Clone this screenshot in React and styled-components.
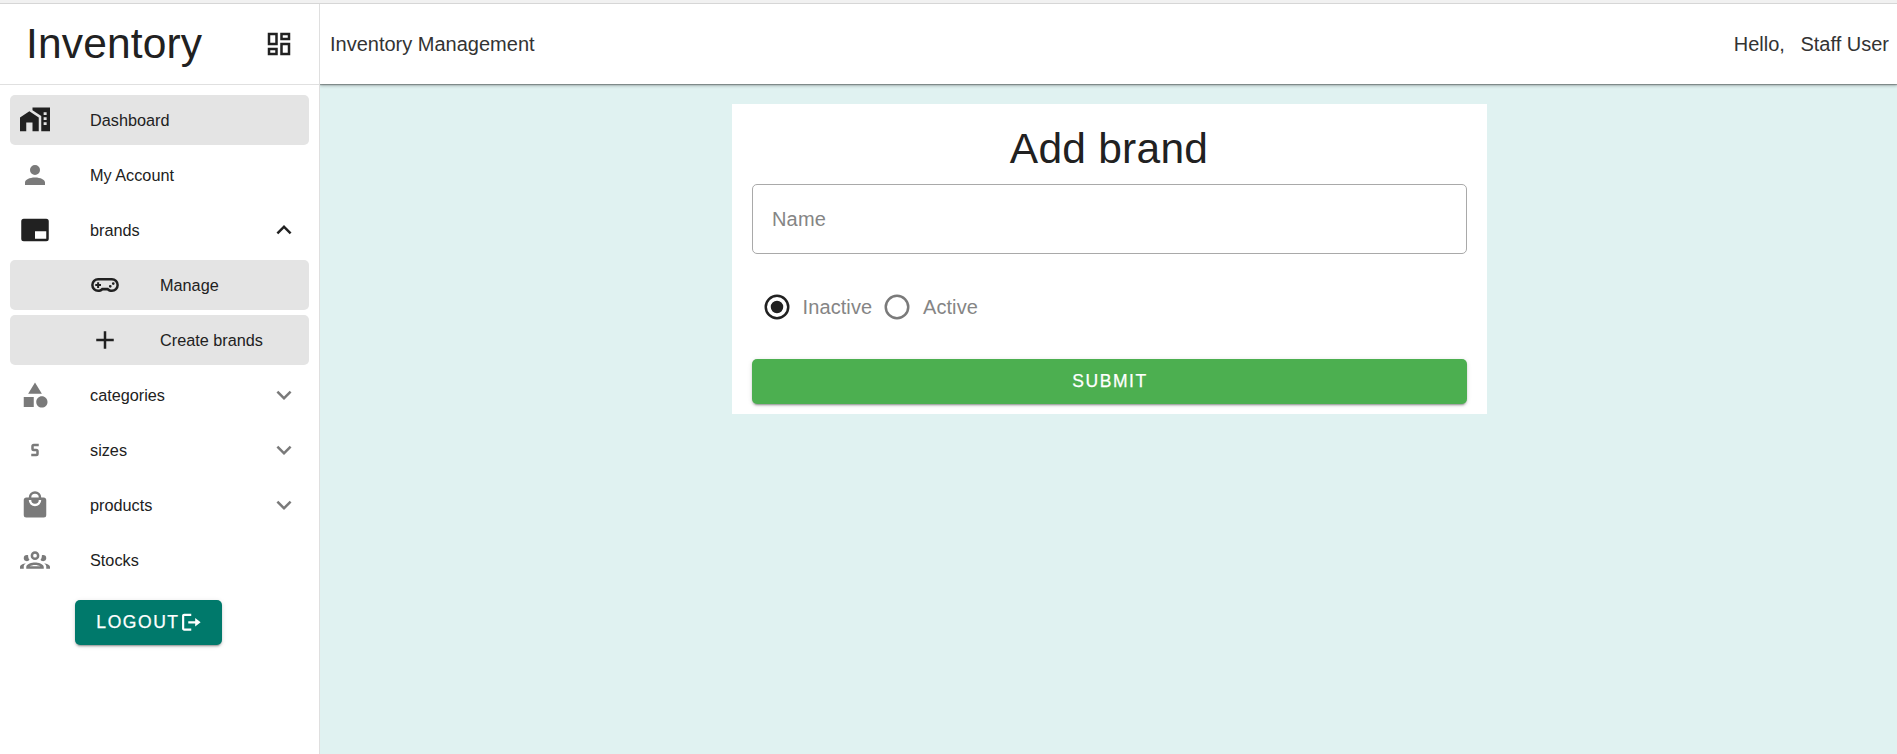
import React from 'react';
import styled, { createGlobalStyle, css } from 'styled-components';

const Global = createGlobalStyle`
  *, *::before, *::after { box-sizing: border-box; }
  body { margin: 0; overflow: hidden; font-family: "Liberation Sans", Arial, sans-serif; color: #212121; }
`;

const ICONS = {
  dashboard: 'M19,5V7H15V5H19M9,5V11H5V5H9M19,13V19H15V13H19M9,17V19H5V17H9M21,3H13V9H21V3M11,3H3V13H11V3M21,11H13V21H21V11M11,15H3V21H11V15Z',
  home: 'M10,2V4.2L17,8.8V21H24V2H10M18.9,5.8H21.3V8H18.9V5.8M18.9,9.8H21.3V12H18.9V9.8M18.9,13.8H21.3V16H18.9V13.8M7.5,5L0,10V21H5V14H10V21H15V10L7.5,5Z',
  account: 'M12,4A4,4 0 0,1 16,8A4,4 0 0,1 12,12A4,4 0 0,1 8,8A4,4 0 0,1 12,4M12,14C16.42,14 20,15.79 20,18V20H4V18C4,15.79 7.58,14 12,14Z',
  watermark: 'M21,3H3A2,2 0 0,0 1,5V19A2,2 0 0,0 3,21H21A2,2 0 0,0 23,19V5A2,2 0 0,0 21,3M21,19H12V13H21V19Z',
  gamepad: 'M6.5,6.4H17.5A5.6,5.6 0 0,1 23.1,12A5.6,5.6 0 0,1 17.5,17.6C16,17.6 14.8,17.1 13.8,16.3H10.2C9.2,17.1 8,17.6 6.5,17.6A5.6,5.6 0 0,1 0.9,12A5.6,5.6 0 0,1 6.5,6.4M6.5,8.4A3.6,3.6 0 0,0 2.9,12A3.6,3.6 0 0,0 6.5,15.6C7.8,15.6 8.7,15.1 9.4,14.2H14.6C15.3,15.1 16.2,15.6 17.5,15.6A3.6,3.6 0 0,0 21.1,12A3.6,3.6 0 0,0 17.5,8.4H6.5M5.7,9.7H7.3V11.2H8.8V12.8H7.3V14.3H5.7V12.8H4.2V11.2H5.7V9.7M18.6,9.7A1.1,1.1 0 0,1 19.7,10.8A1.1,1.1 0 0,1 18.6,11.9A1.1,1.1 0 0,1 17.5,10.8A1.1,1.1 0 0,1 18.6,9.7M16.2,11.9A1.1,1.1 0 0,1 17.3,13A1.1,1.1 0 0,1 16.2,14.1A1.1,1.1 0 0,1 15.1,13A1.1,1.1 0 0,1 16.2,11.9Z',
  plus: 'M19,13H13V19H11V13H5V11H11V5H13V11H19V13Z',
  shape: 'M11,13.5V21.5H3V13.5H11M12,2L17.5,11H6.5L12,2M17.5,13C20,13 22,15 22,17.5C22,20 20,22 17.5,22C15,22 13,20 13,17.5C13,15 15,13 17.5,13Z',
  sizeS: 'M11,7A2,2 0 0,0 9,9V11A2,2 0 0,0 11,13H13V15H9V17H13A2,2 0 0,0 15,15V13A2,2 0 0,0 13,11H11V9H15V7H11Z',
  shopping: 'M12,13A5,5 0 0,1 7,8H9A3,3 0 0,0 12,11A3,3 0 0,0 15,8H17A5,5 0 0,1 12,13M12,3A3,3 0 0,1 15,6H9A3,3 0 0,1 12,3M19,6H17A5,5 0 0,0 12,1A5,5 0 0,0 7,6H5C3.89,6 3,6.89 3,8V20A2,2 0 0,0 5,22H19A2,2 0 0,0 21,20V8C21,6.89 20.1,6 19,6Z',
  group: 'M12,5A3.5,3.5 0 0,0 8.5,8.5A3.5,3.5 0 0,0 12,12A3.5,3.5 0 0,0 15.5,8.5A3.5,3.5 0 0,0 12,5M12,7A1.5,1.5 0 0,1 13.5,8.5A1.5,1.5 0 0,1 12,10A1.5,1.5 0 0,1 10.5,8.5A1.5,1.5 0 0,1 12,7M5.5,8A2.5,2.5 0 0,0 3,10.5C3,11.44 3.53,12.25 4.29,12.68C4.65,12.88 5.06,13 5.5,13C5.94,13 6.35,12.88 6.71,12.68C7.08,12.47 7.39,12.17 7.62,11.81C6.89,10.86 6.5,9.7 6.5,8.5C6.5,8.41 6.5,8.31 6.5,8.22C6.2,8.08 5.86,8 5.5,8M18.5,8C18.14,8 17.8,8.08 17.5,8.22C17.5,8.31 17.5,8.41 17.5,8.5C17.5,9.7 17.11,10.86 16.38,11.81C16.5,12 16.63,12.15 16.78,12.3C16.94,12.45 17.1,12.58 17.29,12.68C17.65,12.88 18.06,13 18.5,13C18.94,13 19.35,12.88 19.71,12.68C20.47,12.25 21,11.44 21,10.5A2.5,2.5 0 0,0 18.5,8M12,14C9.66,14 5,15.17 5,17.5V19H19V17.5C19,15.17 14.34,14 12,14M4.71,14.55C2.78,14.78 0,15.76 0,17.5V19H3V17.07C3,16.06 3.69,15.22 4.71,14.55M19.29,14.55C20.31,15.22 21,16.06 21,17.07V19H24V17.5C24,15.76 21.22,14.78 19.29,14.55M12,16C13.53,16 15.24,16.5 16.23,17H7.77C8.76,16.5 10.47,16 12,16Z',
  down: 'M7.41,8.58L12,13.17L16.59,8.58L18,10L12,16L6,10L7.41,8.58Z',
  up: 'M7.41,15.41L12,10.83L16.59,15.41L18,14L12,8L6,14L7.41,15.41Z',
  logout: 'M16.2 7.4V10.8H8.8V13.2H16.2V16.6L22 12M4.5 5.3H12V3H4.5C3.2 3 2.2 3.9 2.2 5V19C2.2 20.1 3.2 21 4.5 21H12V18.7H4.5V5.3Z',
  radioOff: 'M12,20A8,8 0 0,1 4,12A8,8 0 0,1 12,4A8,8 0 0,1 20,12A8,8 0 0,1 12,20M12,2A10,10 0 0,0 2,12A10,10 0 0,0 12,22A10,10 0 0,0 22,12A10,10 0 0,0 12,2Z',
  radioOn: 'M12,20A8,8 0 0,1 4,12A8,8 0 0,1 12,4A8,8 0 0,1 20,12A8,8 0 0,1 12,20M12,2A10,10 0 0,0 2,12A10,10 0 0,0 12,22A10,10 0 0,0 22,12A10,10 0 0,0 12,2M12,7A5,5 0 0,0 7,12A5,5 0 0,0 12,17A5,5 0 0,0 17,12A5,5 0 0,0 12,7Z',
};

const Svg = styled.svg`
  display: block;
  flex: none;
  width: ${(p) => p.$size}px;
  height: ${(p) => p.$size}px;
  fill: ${(p) => (p.$muted ? '#7a7a7a' : 'currentColor')};
`;

const Icon = ({ name, size = 30, muted }) => (
  <Svg viewBox="0 0 24 24" $size={size} $muted={muted} aria-hidden="true">
    <path d={ICONS[name]} />
  </Svg>
);

const Page = styled.div`
  display: flex;
  flex-direction: column;
  height: 754px;
  background: #fff;
`;

const TopStrip = styled.div`
  position: relative;
  z-index: 1;
  flex: none;
  height: 4px;
  background: #f1f1f1;
  border-bottom: 1px solid #d6d6d6;
`;

const Shell = styled.div`
  flex: 1;
  display: flex;
  min-height: 0;
`;

const Sidebar = styled.aside`
  position: relative;
  z-index: 1;
  flex: none;
  width: 320px;
  background: #fff;
  border-right: 1px solid #dfdfdf;
`;

const Brand = styled.div`
  display: flex;
  align-items: center;
  justify-content: space-between;
  height: 81px;
  padding: 0 25px 1px 26px;
  border-bottom: 1px solid #e0e0e0;
`;

const BrandName = styled.h1`
  margin: 0;
  font-size: 42.5px;
  font-weight: 400;
  line-height: 50px;
  letter-spacing: 0.15px;
`;

const Nav = styled.nav`
  display: flex;
  flex-direction: column;
  gap: 5px;
  padding: 10px;
`;

const NavItem = styled.a`
  display: flex;
  align-items: center;
  height: 50px;
  padding: 0 10px ${(p) => (p.$nested ? '0 80px' : '0 10px')};
  border-radius: 5px;
  background: ${(p) => (p.$active ? '#e4e4e4' : 'transparent')};
`;

const NavLabel = styled.span`
  flex: 1;
  margin-left: 40px;
  font-size: 16.25px;
  line-height: 25px;
`;

const raised = css`
  border-radius: 5px;
  box-shadow: 0 3px 1px -2px rgba(0, 0, 0, 0.2), 0 2px 2px rgba(0, 0, 0, 0.14), 0 1px 5px rgba(0, 0, 0, 0.12);
`;

const Button = styled.button`
  ${raised}
  display: flex;
  align-items: center;
  justify-content: center;
  height: 45px;
  padding: 0 19px 0 20px;
  border: 0;
  color: #fff;
  background: ${(p) => p.$color};
  font: 400 17.5px "Liberation Sans", Arial, sans-serif;
  letter-spacing: 1.56px;
  text-transform: uppercase;
  -webkit-text-stroke: 0.25px #fff;
`;

const LogoutButton = styled(Button)`
  width: 147px;
  margin: 10px 0 0 65px;
  padding: 0 19px 0 21px;
  gap: 0.5px;
`;

const Content = styled.div`
  flex: 1;
  display: flex;
  flex-direction: column;
`;

const AppBar = styled.header`
  position: relative;
  flex: none;
  display: flex;
  align-items: center;
  justify-content: space-between;
  height: 80px;
  padding: 0 8px 0 10px;
  background: #fff;
  color: #333;
  font-size: 20px;
  box-shadow: 0 1px 1px rgba(0, 0, 0, 0.3), 0 2px 3px rgba(0, 0, 0, 0.22);
`;

const Greeting = styled.div`
  display: flex;
  gap: 15.5px;
`;

const Main = styled.main`
  flex: 1;
  display: flex;
  justify-content: center;
  align-items: flex-start;
  padding-top: 20px;
  background: #e0f2f1;
`;

const Card = styled.form`
  width: 755px;
  height: 310px;
  margin-left: 1px;
  padding: 20px 20px 10px;
  background: #fff;
`;

const CardTitle = styled.h2`
  margin: 0 0 10px;
  font-size: 42.5px;
  font-weight: 400;
  line-height: 50px;
  letter-spacing: 0.25px;
  text-align: center;
`;

const Field = styled.label`
  display: flex;
  align-items: center;
  height: 70px;
  padding: 0 19.5px;
  border: 1px solid #a9a9a9;
  border-radius: 5px;
  color: #858585;
  font-size: 20px;
  letter-spacing: 0.18px;
`;

const Radios = styled.div`
  display: flex;
  gap: 10px;
  height: 50px;
  margin: 28px 0 27px;
  padding-left: 10.3px;
`;

const Radio = styled.label`
  display: flex;
  align-items: center;
  gap: 10.8px;
  color: #858585;
  font-size: 20px;
  letter-spacing: 0.08px;
`;

const Ring = styled.span`
  color: #212121;
`;

const Submit = styled(Button)`
  width: 100%;
  padding-left: 21px;
`;

const NAV = [
  { icon: 'home', label: 'Dashboard', active: true },
  { icon: 'account', label: 'My Account', muted: true },
  { icon: 'watermark', label: 'brands', chevron: 'up' },
  { icon: 'gamepad', label: 'Manage', active: true, nested: true },
  { icon: 'plus', label: 'Create brands', active: true, nested: true },
  { icon: 'shape', label: 'categories', muted: true, chevron: 'down' },
  { icon: 'sizeS', label: 'sizes', muted: true, chevron: 'down' },
  { icon: 'shopping', label: 'products', muted: true, chevron: 'down' },
  { icon: 'group', label: 'Stocks', muted: true },
];

export default function App() {
  return (
    <Page>
      <Global />
      <TopStrip />
      <Shell>
        <Sidebar>
          <Brand>
            <BrandName>Inventory</BrandName>
            <Icon name="dashboard" />
          </Brand>
          <Nav>
            {NAV.map((item) => (
              <NavItem key={item.label} $active={item.active} $nested={item.nested}>
                <Icon name={item.icon} muted={item.muted} />
                <NavLabel>{item.label}</NavLabel>
                {item.chevron && <Icon name={item.chevron} muted={item.muted} />}
              </NavItem>
            ))}
            <LogoutButton type="button" $color="#00796b">
              Logout
              <Icon name="logout" size={22.5} />
            </LogoutButton>
          </Nav>
        </Sidebar>
        <Content>
          <AppBar>
            <span>Inventory Management</span>
            <Greeting>
              <span>Hello,</span>
              <span>Staff User</span>
            </Greeting>
          </AppBar>
          <Main>
            <Card>
              <CardTitle>Add brand</CardTitle>
              <Field>Name</Field>
              <Radios>
                <Radio>
                  <Ring><Icon name="radioOn" /></Ring>
                  Inactive
                </Radio>
                <Radio>
                  <Icon name="radioOff" muted />
                  Active
                </Radio>
              </Radios>
              <Submit type="button" $color="#4caf50">Submit</Submit>
            </Card>
          </Main>
        </Content>
      </Shell>
    </Page>
  );
}
